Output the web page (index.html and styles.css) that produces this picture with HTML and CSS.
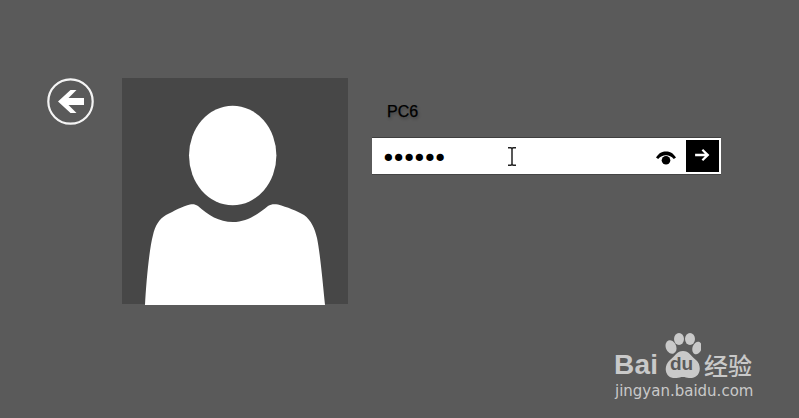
FILE: index.html
```html
<!DOCTYPE html>
<html lang="zh">
<head>
<meta charset="utf-8">
<title>PC6</title>
<link rel="stylesheet" href="styles.css">
</head>
<body>
<main class="screen">
  <svg class="back" viewBox="47 78 47 47" aria-label="back">
    <circle cx="70.5" cy="101.5" r="22.2" fill="none" stroke="#f4f4f4" stroke-width="2.2"/>
    <path d="M58 101.5 70.5 90H76.5L68.5 98H84V105H68.5L76.5 113H70.5Z" fill="#fff"/>
  </svg>
  <svg class="avatar" viewBox="122 78 226 227" aria-label="avatar">
    <rect x="122" y="78" width="226" height="226" fill="#474747"/>
    <ellipse cx="232.7" cy="155.5" rx="43.7" ry="49.7" fill="#fff"/>
    <path d="M145 305C146 285 149 250 153 235C155 226 159 219 166 215C174 211 183 206 190 204.500C193 204 195 204 198 206C208 215 219 222 233 222C247 222 258 214 268 206C271 204 274 204 278 204.500C287 207 297 211 304 215C311 220 315 229 317 238C320 252 323 285 325 305Z" fill="#fff"/>
  </svg>
  <section class="login">
    <div class="name">PC6</div>
    <div class="field">
      <span class="dots">••••••</span>
      <svg class="ibeam" viewBox="0 0 10 19">
        <path d="M1 .7H3.5Q5 .7 5 2.5V16.500Q5 18.300 3.500 18.300H1M9 .7H6.500Q5 .7 5 2.500M5 16.500Q5 18.300 6.500 18.300H9" fill="none" stroke="#222" stroke-width="1.500"/>
      </svg>
      <svg class="eye" viewBox="0 0 20 14">
        <path d="M0 6.500C3 2 6 .5 10 .5S17 2 20 6.500L17.800 8C15.500 5.500 13 4.300 10 4.300S4.500 5.500 2.200 8Z" fill="#000"/>
        <circle cx="10" cy="9.300" r="4.300" fill="#000"/>
      </svg>
      <button class="go" type="button" aria-label="submit">
        <svg viewBox="0 0 16 13" class="go-icon">
          <path d="M0 5.200H10.500L7 1.500 8.700 0 15.500 6.500 8.700 13 7 11.500 10.500 7.800H0Z" fill="#fff"/>
        </svg>
      </button>
    </div>
  </section>
  <aside class="mark">
    <div class="mark-top">
      <span class="bai">Bai</span>
      <span class="paw">
        <svg viewBox="0 0 37 45" class="paw-svg">
          <ellipse cx="7" cy="14" rx="5.200" ry="7" transform="rotate(-22 7 14)" fill="#c9c9c9"/>
          <ellipse cx="15" cy="6" rx="5" ry="6" fill="#c9c9c9"/>
          <ellipse cx="26" cy="6" rx="5" ry="6" fill="#c9c9c9"/>
          <ellipse cx="33" cy="15" rx="4.500" ry="6.500" transform="rotate(18 33 15)" fill="#c9c9c9"/>
          <path d="M19 18C25 18 27 23 32 27C38 32 37 44 28 45C24 45.500 22 44 19 44S13 45.500 9 45C1 44 -1 33 6 27C11 23 13 18 19 18Z" fill="#c9c9c9"/>
        </svg>
        <span class="du">du</span>
      </span>
      <span class="cn">经验</span>
    </div>
    <div class="url">jingyan.baidu.com</div>
  </aside>
</main>
</body>
</html>
```
FILE: styles.css
```css
* { box-sizing: border-box; }
html, body { margin: 0; padding: 0; }
body { background: #5a5a5a; overflow: hidden; }
.screen {
  position: relative;
  width: 799px;
  height: 418px;
  background: #5a5a5a;
  display: flex;
  align-items: flex-start;
  padding: 78px 0 0 47px;
  font-family: "Liberation Sans", Arial, sans-serif;
}
.back { width: 47px; height: 47px; flex: none; }
.avatar { width: 226px; height: 227px; flex: none; margin-left: 28px; }
.login { margin-left: 24px; display: flex; flex-direction: column; width: 349px; padding-top: 25px; }
.name {
  margin-left: 15px;
  font-size: 16px;
  line-height: 18px;
  color: #000;
  -webkit-text-stroke: .25px #000;
  text-shadow: 1px 2px 3px rgba(0, 0, 0, .3);
}
.field {
  position: relative;
  margin-top: 16px;
  height: 38px;
  background: #fff;
  border-top: 1px solid #3f3f3f;
  border-bottom: 1px solid #454545;
  display: flex;
  align-items: center;
  padding: 0 2px 0 11px;
}
.dots {
  font-family: "DejaVu Sans", sans-serif;
  font-size: 25px;
  letter-spacing: -4.400px;
  line-height: 30px;
  color: #000;
  padding-top: 6px;
  margin-left: -2px;
}
.ibeam { position: absolute; left: 135px; top: 9px; width: 10px; height: 19px; }
.eye { width: 20px; height: 14px; margin-left: auto; margin-top: 3px; }
.go {
  width: 33px;
  height: 32px;
  margin-left: 10px;
  background: #000;
  border: 0;
  padding: 0;
  display: flex;
  align-items: center;
  justify-content: center;
}
.go-icon { width: 15px; height: 12px; margin-bottom: 2px; }
.mark {
  position: absolute;
  left: 614px;
  top: 333px;
  width: 142px;
  color: #c9c9c9;
}
.mark-top { display: flex; align-items: flex-end; height: 45px; }
.bai { font-weight: bold; font-size: 28px; line-height: 26px; letter-spacing: .2px; width: 50px; }
.paw { position: relative; width: 38px; height: 45px; margin-left: 0; flex: none; }
.paw-svg { width: 37px; height: 45px; display: block; }
.du {
  position: absolute;
  left: 6px;
  top: 21px;
  font-size: 19px;
  line-height: 20px;
  font-weight: bold;
  color: #5a5a5a;
}
.cn {
  font-family: "Noto Sans CJK SC", sans-serif;
  font-size: 24px;
  font-weight: 500;
  line-height: 28px;
  margin-left: 2px;
  margin-bottom: -1px;
  white-space: nowrap;
}
.url {
  font-family: "DejaVu Sans", sans-serif;
  font-size: 15px;
  line-height: 18px;
  margin-top: 4px;
  margin-left: 1px;
  white-space: nowrap;
}
```
